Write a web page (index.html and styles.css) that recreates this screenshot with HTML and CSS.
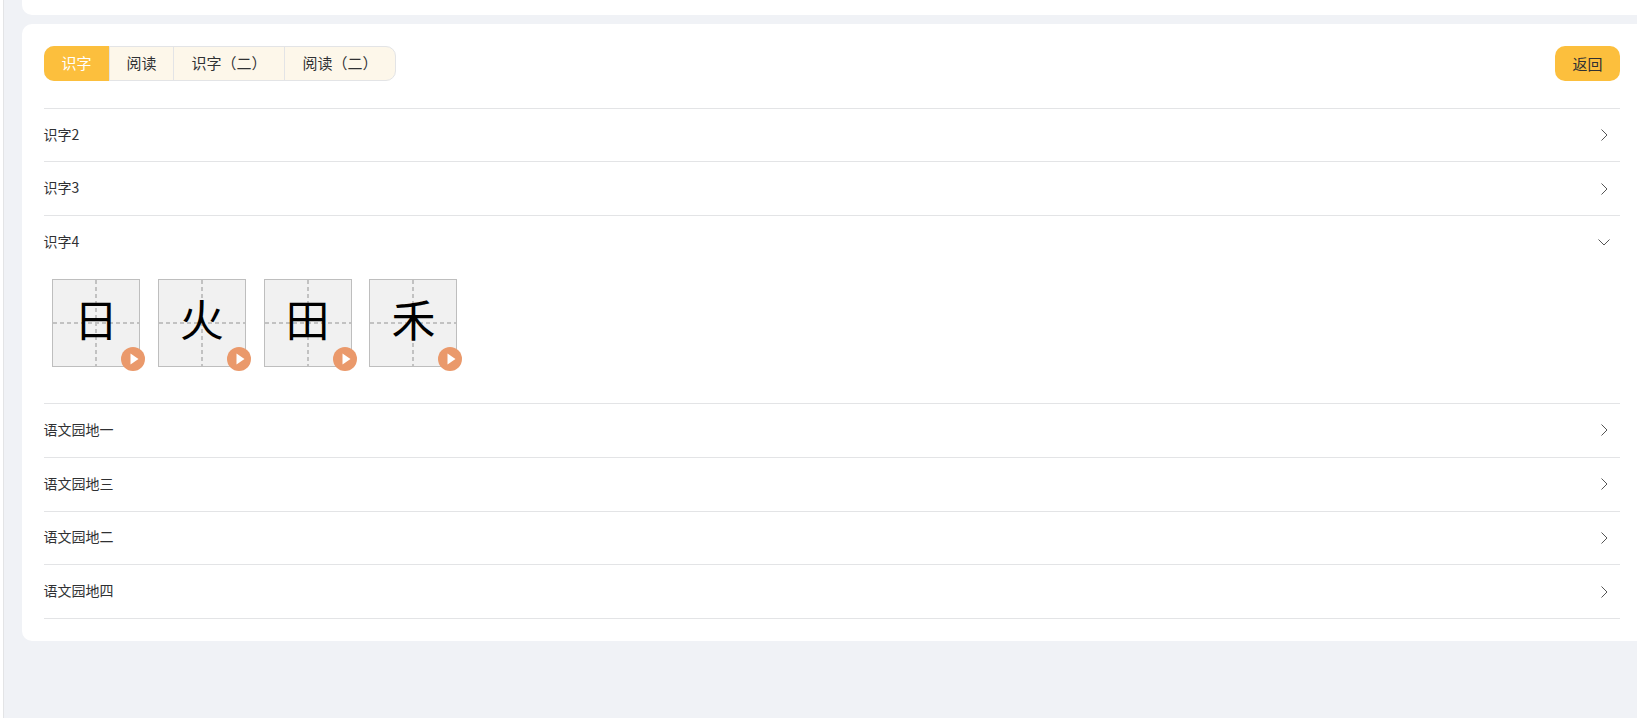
FILE: index.html
```html
<!DOCTYPE html>
<html lang="zh-CN">
    <head>
        <meta charset="UTF-8">
        <title>识字</title>
        <link rel="stylesheet" href="styles.css">
    </head>
    <body>
        <div class="sidebar-edge"></div>
        <main class="main">
            <div class="card card-top"></div>
            <div class="card card-lessons">
                <div class="toolbar">
                    <div class="tabs">
                        <div class="tab tab-active">识字</div>
                        <div class="tab">阅读</div>
                        <div class="tab tab-wide">识字（二）</div>
                        <div class="tab tab-wide">阅读（二）</div>
                    </div>
                    <button class="back">返回</button>
                </div>

                <div class="lessons">
                    <div class="lesson">
                        <div class="lesson-head"><span class="lesson-name">识字2</span><svg class="arrow" viewBox="0 0 12 12"><path d="M3.500 .5l5.500 5.500-5.500 5.500"/></svg></div>
                    </div>
                    <div class="lesson">
                        <div class="lesson-head"><span class="lesson-name">识字3</span><svg class="arrow" viewBox="0 0 12 12"><path d="M3.500 .5l5.500 5.500-5.500 5.500"/></svg></div>
                    </div>
                    <div class="lesson">
                        <div class="lesson-head"><span class="lesson-name">识字4</span><svg class="arrow" viewBox="0 0 12 12"><path d="M.5 3.500l5.500 5.500 5.500-5.500"/></svg></div>
                        <div class="chars">
                            <div class="char">
                                <svg class="char-grid" viewBox="0 0 86 86"><path d="M0 43h86M43 0v86"/></svg>
                                <span class="char-text">日</span>
                                <svg class="play" viewBox="0 0 24 24"><circle cx="12" cy="12" r="12"/><path d="M9.500 6.500l8 5.500-8 5.500z"/></svg>
                            </div>
                            <div class="char">
                                <svg class="char-grid" viewBox="0 0 86 86"><path d="M0 43h86M43 0v86"/></svg>
                                <span class="char-text">火</span>
                                <svg class="play" viewBox="0 0 24 24"><circle cx="12" cy="12" r="12"/><path d="M9.500 6.500l8 5.500-8 5.500z"/></svg>
                            </div>
                            <div class="char">
                                <svg class="char-grid" viewBox="0 0 86 86"><path d="M0 43h86M43 0v86"/></svg>
                                <span class="char-text">田</span>
                                <svg class="play" viewBox="0 0 24 24"><circle cx="12" cy="12" r="12"/><path d="M9.500 6.500l8 5.500-8 5.500z"/></svg>
                            </div>
                            <div class="char">
                                <svg class="char-grid" viewBox="0 0 86 86"><path d="M0 43h86M43 0v86"/></svg>
                                <span class="char-text">禾</span>
                                <svg class="play" viewBox="0 0 24 24"><circle cx="12" cy="12" r="12"/><path d="M9.500 6.500l8 5.500-8 5.500z"/></svg>
                            </div>
                        </div>
                    </div>
                    <div class="lesson">
                        <div class="lesson-head"><span class="lesson-name">语文园地一</span><svg class="arrow" viewBox="0 0 12 12"><path d="M3.500 .5l5.500 5.500-5.500 5.500"/></svg></div>
                    </div>
                    <div class="lesson">
                        <div class="lesson-head"><span class="lesson-name">语文园地三</span><svg class="arrow" viewBox="0 0 12 12"><path d="M3.500 .5l5.500 5.500-5.500 5.500"/></svg></div>
                    </div>
                    <div class="lesson">
                        <div class="lesson-head"><span class="lesson-name">语文园地二</span><svg class="arrow" viewBox="0 0 12 12"><path d="M3.500 .5l5.500 5.500-5.500 5.500"/></svg></div>
                    </div>
                    <div class="lesson">
                        <div class="lesson-head"><span class="lesson-name">语文园地四</span><svg class="arrow" viewBox="0 0 12 12"><path d="M3.500 .5l5.500 5.500-5.500 5.500"/></svg></div>
                    </div>
                </div>
            </div>
        </main>
    </body>
</html>
```

FILE: styles.css
```css
:root {
    --my-bg: #f0f2f6;
    --my-line: #e3e4e6;
    --my-yellow: #fcbf3d;
    --my-cream: #fdf7ea;
    --my-text: #303133;
    --my-orange: #ea996b;
}

html, body {
    height: 100%;
}

body {
    margin: 0;
    height: 718px;
    display: flex;
    overflow: hidden;
    background-color: var(--my-bg);
    color: var(--my-text);
    font-family: "Noto Sans CJK SC", "Liberation Sans", sans-serif;
    font-size: 14px;
}

.sidebar-edge {
    flex: 0 0 3px;
    background-color: #fff;
    border-right: 1px solid var(--my-line);
}

.main {
    flex: 1 0 1655px;
    padding: 0 0 0 18px;
}

.card {
    background-color: #fff;
    border-radius: 10px;
}

.card-top {
    height: 15px;
    margin-bottom: 9px;
    border-radius: 0 0 10px 10px;
}

.card-lessons {
    padding: 22px;
    height: 573px;
}

.toolbar {
    display: flex;
    justify-content: space-between;
    align-items: center;
    width: 1576px;
    height: 35px;
    margin-bottom: 26.7px;
}

.tabs {
    display: flex;
    height: 35px;
    box-sizing: border-box;
    border: 1px solid var(--my-line);
    border-radius: 10px;
    background-color: var(--my-cream);
    font-size: 15px;
}

.tab {
    width: 64px;
    line-height: 32px;
    text-align: center;
    border-left: 1px solid var(--my-line);
    box-sizing: border-box;
}

.tab-active {
    width: 65px;
    margin: -1px 0 -1px -1px;
    line-height: 34px;
    border-left: 0;
    border-radius: 10px 0 0 10px;
    background-color: var(--my-yellow);
    color: #fff;
}

.tab-wide {
    width: 111px;
}

.back {
    width: 65px;
    height: 35px;
    padding: 0 0 1px;
    border: 0;
    border-radius: 10px;
    background-color: var(--my-yellow);
    color: var(--my-text);
    font-family: inherit;
    font-size: 15px;
}

.lessons {
    width: 1576px;
    border-top: 1px solid var(--my-line);
}

.lesson {
    border-bottom: 1px solid var(--my-line);
}

.lesson-head {
    display: flex;
    justify-content: space-between;
    align-items: center;
    height: 52.7px;
}

.lesson-name {
    margin: 0 0 3px -0.5px;
}

.arrow {
    width: 12px;
    height: 12px;
    margin-right: 10px;
    fill: none;
    stroke: #555;
    stroke-width: 1;
}

.chars {
    display: flex;
    gap: 17.8px;
    padding: 10.2px 8px 36.2px;
}

.char {
    position: relative;
    width: 88px;
    height: 88px;
    box-sizing: border-box;
    border: 1px solid #bebebe;
    background-color: #f1f1f1;
    display: flex;
    align-items: center;
    justify-content: center;
}

.char-grid {
    position: absolute;
    top: 0;
    left: 0;
    width: 100%;
    height: 100%;
    fill: none;
    stroke: #c2c2c2;
    stroke-width: 2;
    stroke-dasharray: 4 3;
}

.char-text {
    position: relative;
    margin-bottom: 10px;
    font-family: "Noto Sans CJK SC", serif;
    font-size: 44px;
    line-height: 1;
    color: #000;
}

.play {
    position: absolute;
    right: -6px;
    bottom: -5px;
    width: 24px;
    height: 24px;
}

.play circle {
    fill: var(--my-orange);
}

.play path {
    fill: #fff;
}
```
